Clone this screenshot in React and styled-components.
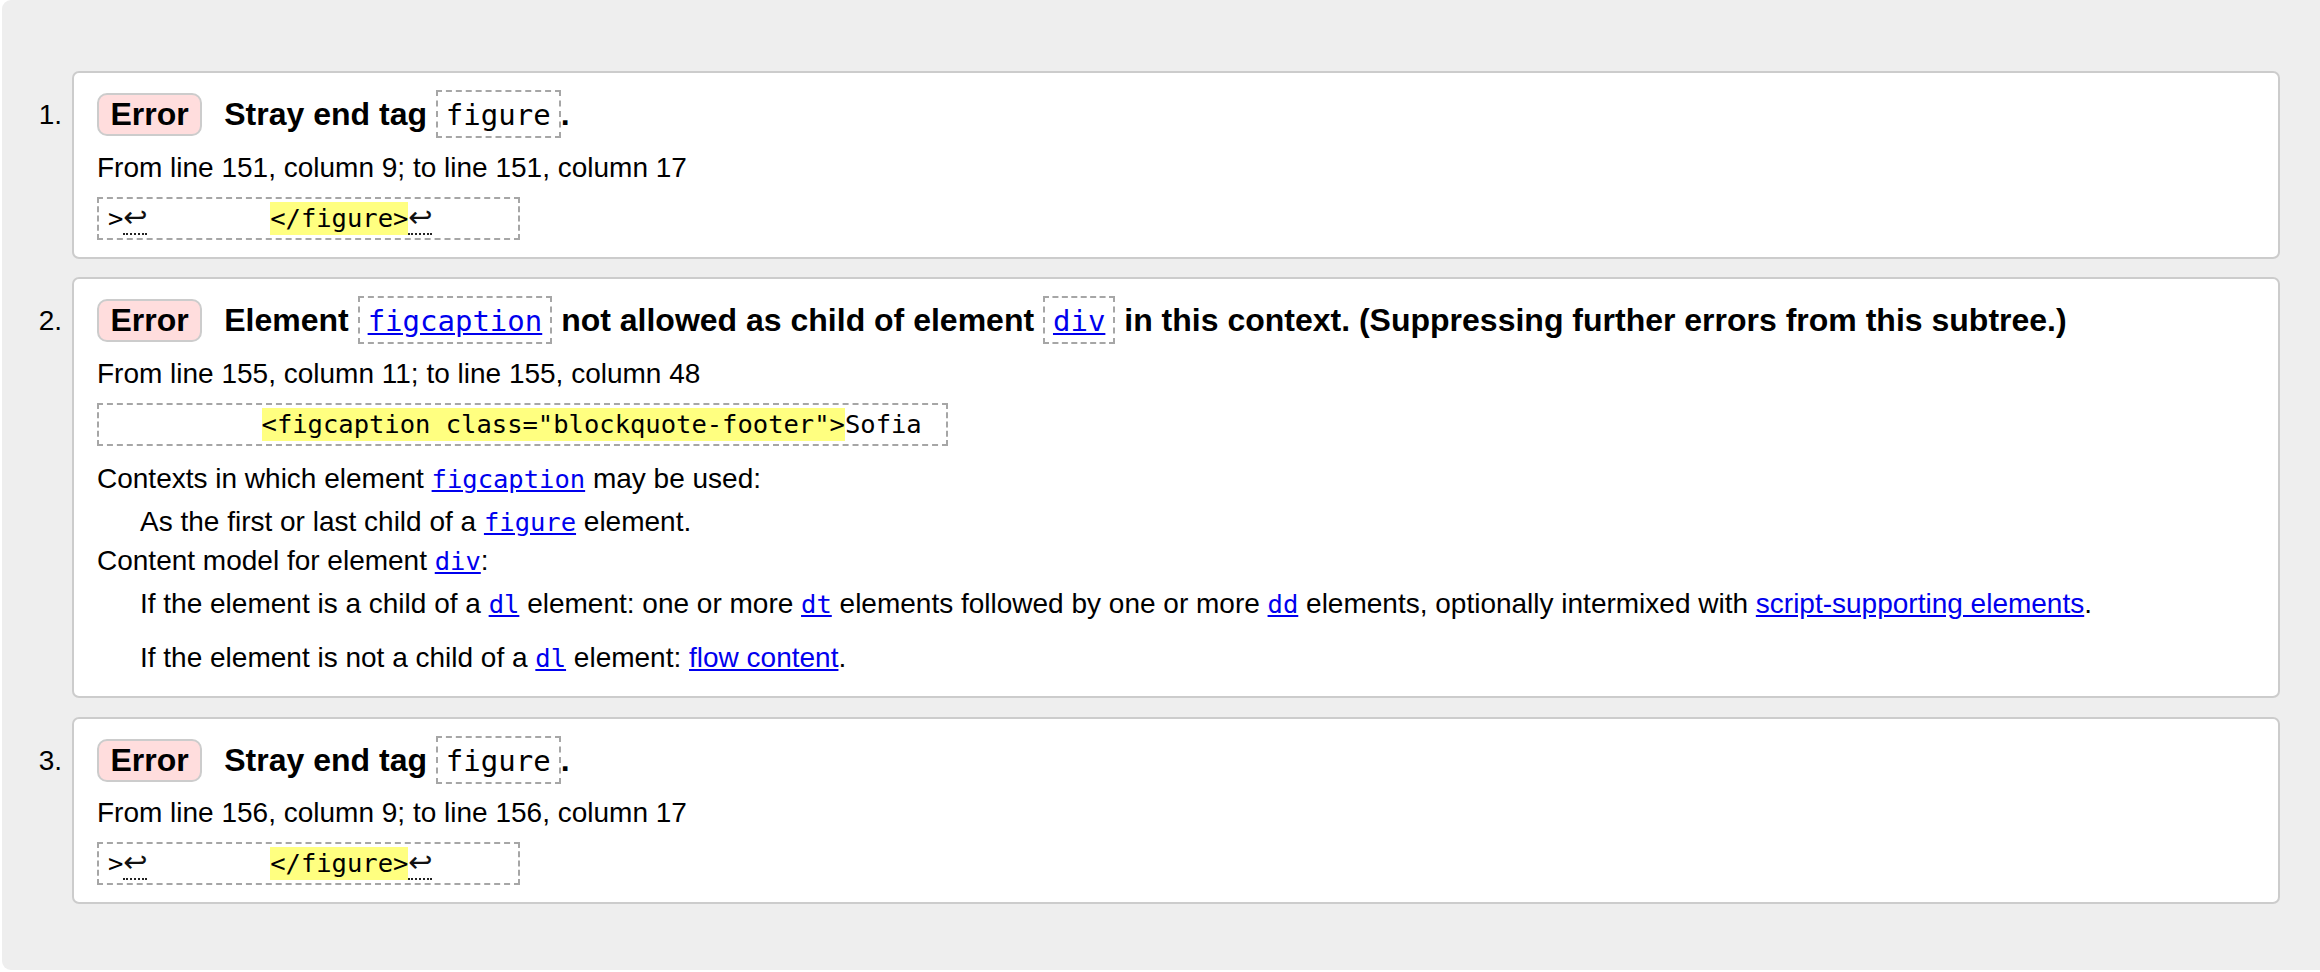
import styled, { createGlobalStyle } from "styled-components";

const GlobalStyle = createGlobalStyle`
  html, body {
    margin: 0;
    padding: 0;
    background: #fff;
  }
  body {
    font-family: "Liberation Sans", Arial, sans-serif;
    font-size: 28px;
    color: #000;
    overflow: hidden;
  }
  a {
    color: #00e;
    text-decoration: underline;
  }
`;

const Page = styled.div`
  margin-left: 2px;
  min-height: 970px;
  box-sizing: border-box;
  background: #eee;
  border-radius: 9px 0 0 9px;
  padding: 71px 40px 0 0;
`;

const List = styled.ol`
  list-style: none;
  margin: 0;
  padding: 0;
  display: flex;
  flex-direction: column;
  gap: 18.5px;
`;

const Item = styled.li`
  display: grid;
  grid-template-columns: 70px 1fr;
`;

const Num = styled.span`
  text-align: right;
  padding: 20px 10px 0 0;
  line-height: 48px;
`;

const Card = styled.div`
  background: #fff;
  border: 2px solid #ccc;
  border-radius: 7px;
  padding: 17px 20px 17px 23px;
`;

const Title = styled.p`
  margin: 0;
  font-size: 32px;
  font-weight: bold;
  line-height: 48px;
  white-space: nowrap;
`;

const Badge = styled.strong`
  display: inline-block;
  background: #fdd;
  border: 2px solid #ccc;
  border-radius: 10px;
  padding: 0 11.5px;
  line-height: 39px;
  margin-right: 22px;
`;

const TagBox = styled.span`
  display: inline-block;
  border: 2px dashed #a6a6a6;
  padding: 4px 8px 2px;
  line-height: 38px;
  font-family: "DejaVu Sans Mono", monospace;
  font-size: 29px;
  font-weight: normal;
`;

const Location = styled.p`
  margin: 9.7px 0 0;
  line-height: 40px;
`;

const Extract = styled.code`
  display: block;
  width: fit-content;
  margin-top: 9px;
  font-family: "DejaVu Sans Mono", monospace;
  font-size: 25.5px;
  line-height: 33px;
  border: 2px dashed #a6a6a6;
  padding: 3px 9px;
  white-space: pre;
`;

const Mark = styled.b`
  display: inline-block;
  font-weight: normal;
  background: #ffff80;
`;

const Lf = styled.span`
  display: inline-block;
  vertical-align: top;
  width: 24px;
  text-align: center;
  font-family: "DejaVu Sans", sans-serif;
  font-size: 29px;
  line-height: 31px;
  color: #111;
  border-bottom: 2px dotted #222;
`;

const Mono = styled.code`
  font-family: "DejaVu Sans Mono", monospace;
  font-size: 25.5px;
  line-height: 1;
`;

const Details = styled.dl`
  margin: 13.3px 0 2px;
`;

const Term = styled.dt`
  line-height: 39px;
`;

const Desc = styled.dd`
  margin: 3.7px 0 0 43px;
  line-height: 39px;
`;

const DescPara = styled.p`
  margin: 0;
  & + & {
    margin-top: 15.6px;
  }
`;

function StrayFigure({ n, line }) {
  return (
    <Item>
      <Num>{n}.</Num>
      <Card>
        <Title>
          <Badge>Error</Badge>Stray end tag <TagBox>figure</TagBox>.
        </Title>
        <Location>
          From line {line}, column 9; to line {line}, column 17
        </Location>
        <Extract>
          {">"}
          <Lf>↩</Lf>
          {"        "}
          <Mark>{"</figure>"}</Mark>
          <Lf>↩</Lf>
          {"     "}
        </Extract>
      </Card>
    </Item>
  );
}

function FigcaptionError() {
  return (
    <Item>
      <Num>2.</Num>
      <Card>
        <Title>
          <Badge>Error</Badge>Element{" "}
          <TagBox>
            <a href="#figcaption">figcaption</a>
          </TagBox>{" "}
          not allowed as child of element{" "}
          <TagBox>
            <a href="#div">div</a>
          </TagBox>{" "}
          in this context. (Suppressing further errors from this subtree.)
        </Title>
        <Location>From line 155, column 11; to line 155, column 48</Location>
        <Extract>
          {"          "}
          <Mark>{'<figcaption class="blockquote-footer">'}</Mark>
          {"Sofia "}
        </Extract>
        <Details>
          <Term>
            Contexts in which element{" "}
            <a href="#figcaption">
              <Mono>figcaption</Mono>
            </a>{" "}
            may be used:
          </Term>
          <Desc>
            As the first or last child of a{" "}
            <a href="#figure">
              <Mono>figure</Mono>
            </a>{" "}
            element.
          </Desc>
          <Term>
            Content model for element{" "}
            <a href="#div">
              <Mono>div</Mono>
            </a>
            :
          </Term>
          <Desc>
            <DescPara>
              If the element is a child of a{" "}
              <a href="#dl">
                <Mono>dl</Mono>
              </a>{" "}
              element: one or more{" "}
              <a href="#dt">
                <Mono>dt</Mono>
              </a>{" "}
              elements followed by one or more{" "}
              <a href="#dd">
                <Mono>dd</Mono>
              </a>{" "}
              elements, optionally intermixed with{" "}
              <a href="#script-supporting">script-supporting elements</a>.
            </DescPara>
            <DescPara>
              If the element is not a child of a{" "}
              <a href="#dl">
                <Mono>dl</Mono>
              </a>{" "}
              element: <a href="#flow">flow content</a>.
            </DescPara>
          </Desc>
        </Details>
      </Card>
    </Item>
  );
}

export default function App() {
  return (
    <>
      <GlobalStyle />
      <Page>
        <List>
          <StrayFigure n={1} line={151} />
          <FigcaptionError />
          <StrayFigure n={3} line={156} />
        </List>
      </Page>
    </>
  );
}
